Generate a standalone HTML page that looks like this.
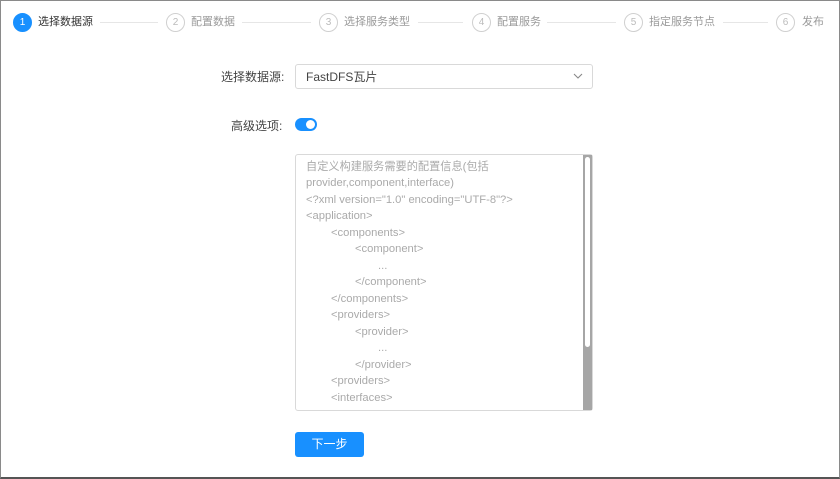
<!DOCTYPE html>
<html><head><meta charset="utf-8"><style>
*{margin:0;padding:0;box-sizing:border-box}
body{width:840px;height:479px;background:#fff;font-family:"Liberation Sans","Noto Sans CJK SC",sans-serif;position:relative;overflow:hidden}
.frame{position:absolute;left:0;top:0;width:840px;height:479px;border:1px solid #8a8a8a;border-bottom:2px solid #555}
.ab{position:absolute}
.c{position:absolute;top:13px;width:19px;height:19px;border-radius:50%;border:1px solid #d0d0d0;color:#bbb;font-size:10px;text-align:center;line-height:17px}
.c.on{background:#1890ff;border-color:#1890ff;color:#fff}
.l{position:absolute;top:15px;font-size:11px;color:#9a9a9a;line-height:14px;white-space:nowrap}
.ln{position:absolute;top:22px;height:1px;background:#e6e6e6}
.t{position:absolute;font-size:11.2px;color:#aaa;left:306px;white-space:nowrap;line-height:16px}
</style></head><body>
<div class="frame"></div>
<div class="c on" style="left:13px">1</div><div class="l" style="left:38px;color:#333">选择数据源</div>
<div class="ln" style="left:100px;width:58px"></div>
<div class="c" style="left:166px">2</div><div class="l" style="left:191px">配置数据</div>
<div class="ln" style="left:242px;width:69px"></div>
<div class="c" style="left:319px">3</div><div class="l" style="left:344px">选择服务类型</div>
<div class="ln" style="left:418px;width:45px"></div>
<div class="c" style="left:472px">4</div><div class="l" style="left:497px">配置服务</div>
<div class="ln" style="left:547px;width:69px"></div>
<div class="c" style="left:624px">5</div><div class="l" style="left:649px">指定服务节点</div>
<div class="ln" style="left:723px;width:45px"></div>
<div class="c" style="left:776px">6</div><div class="l" style="left:802px">发布</div>

<div class="ab" style="left:221px;top:68px;font-size:12px;color:#444">选择数据源:</div>
<div class="ab" style="left:295px;top:64px;width:298px;height:25px;border:1px solid #d9d9d9;border-radius:3px"></div>
<div class="ab" style="left:306px;top:68px;font-size:12px;color:#444">FastDFS瓦片</div>
<svg class="ab" style="left:573px;top:72px" width="10" height="8"><path d="M1 2 L5 6 L9 2" fill="none" stroke="#888" stroke-width="1.1"/></svg>

<div class="ab" style="left:231px;top:117px;font-size:12px;color:#444">高级选项:</div>
<div class="ab" style="left:295px;top:118px;width:22px;height:13px;border-radius:7px;background:#1890ff"></div>
<div class="ab" style="left:306px;top:120px;width:9px;height:9px;border-radius:50%;background:#fff"></div>

<div class="ab" style="left:295px;top:154px;width:298px;height:257px;border:1px solid #d9d9d9;border-radius:3px"></div>
<div class="ab" style="left:583px;top:155px;width:9px;height:255px;background:#a6a6a6"></div>
<div class="ab" style="left:585px;top:157px;width:5px;height:190px;background:#fff;border-radius:3px"></div>
<div class="t" style="top:159px">自定义构建服务需要的配置信息(包括</div>
<div class="t" style="top:175px">provider,component,interface)</div>
<div class="t" style="top:192px">&lt;?xml version="1.0" encoding="UTF-8"?&gt;</div>
<div class="t" style="top:208px">&lt;application&gt;</div>
<div class="t" style="top:225px;left:331px">&lt;components&gt;</div>
<div class="t" style="top:241px;left:355px">&lt;component&gt;</div>
<div class="t" style="top:258px;left:378px">...</div>
<div class="t" style="top:274px;left:355px">&lt;/component&gt;</div>
<div class="t" style="top:291px;left:331px">&lt;/components&gt;</div>
<div class="t" style="top:307px;left:331px">&lt;providers&gt;</div>
<div class="t" style="top:324px;left:355px">&lt;provider&gt;</div>
<div class="t" style="top:340px;left:378px">...</div>
<div class="t" style="top:357px;left:355px">&lt;/provider&gt;</div>
<div class="t" style="top:373px;left:331px">&lt;providers&gt;</div>
<div class="t" style="top:390px;left:331px">&lt;interfaces&gt;</div>

<div class="ab" style="left:295px;top:432px;width:69px;height:25px;background:#1890ff;border-radius:3px;color:#fff;font-size:12px;text-align:center;line-height:25px">下一步</div>
</body></html>
